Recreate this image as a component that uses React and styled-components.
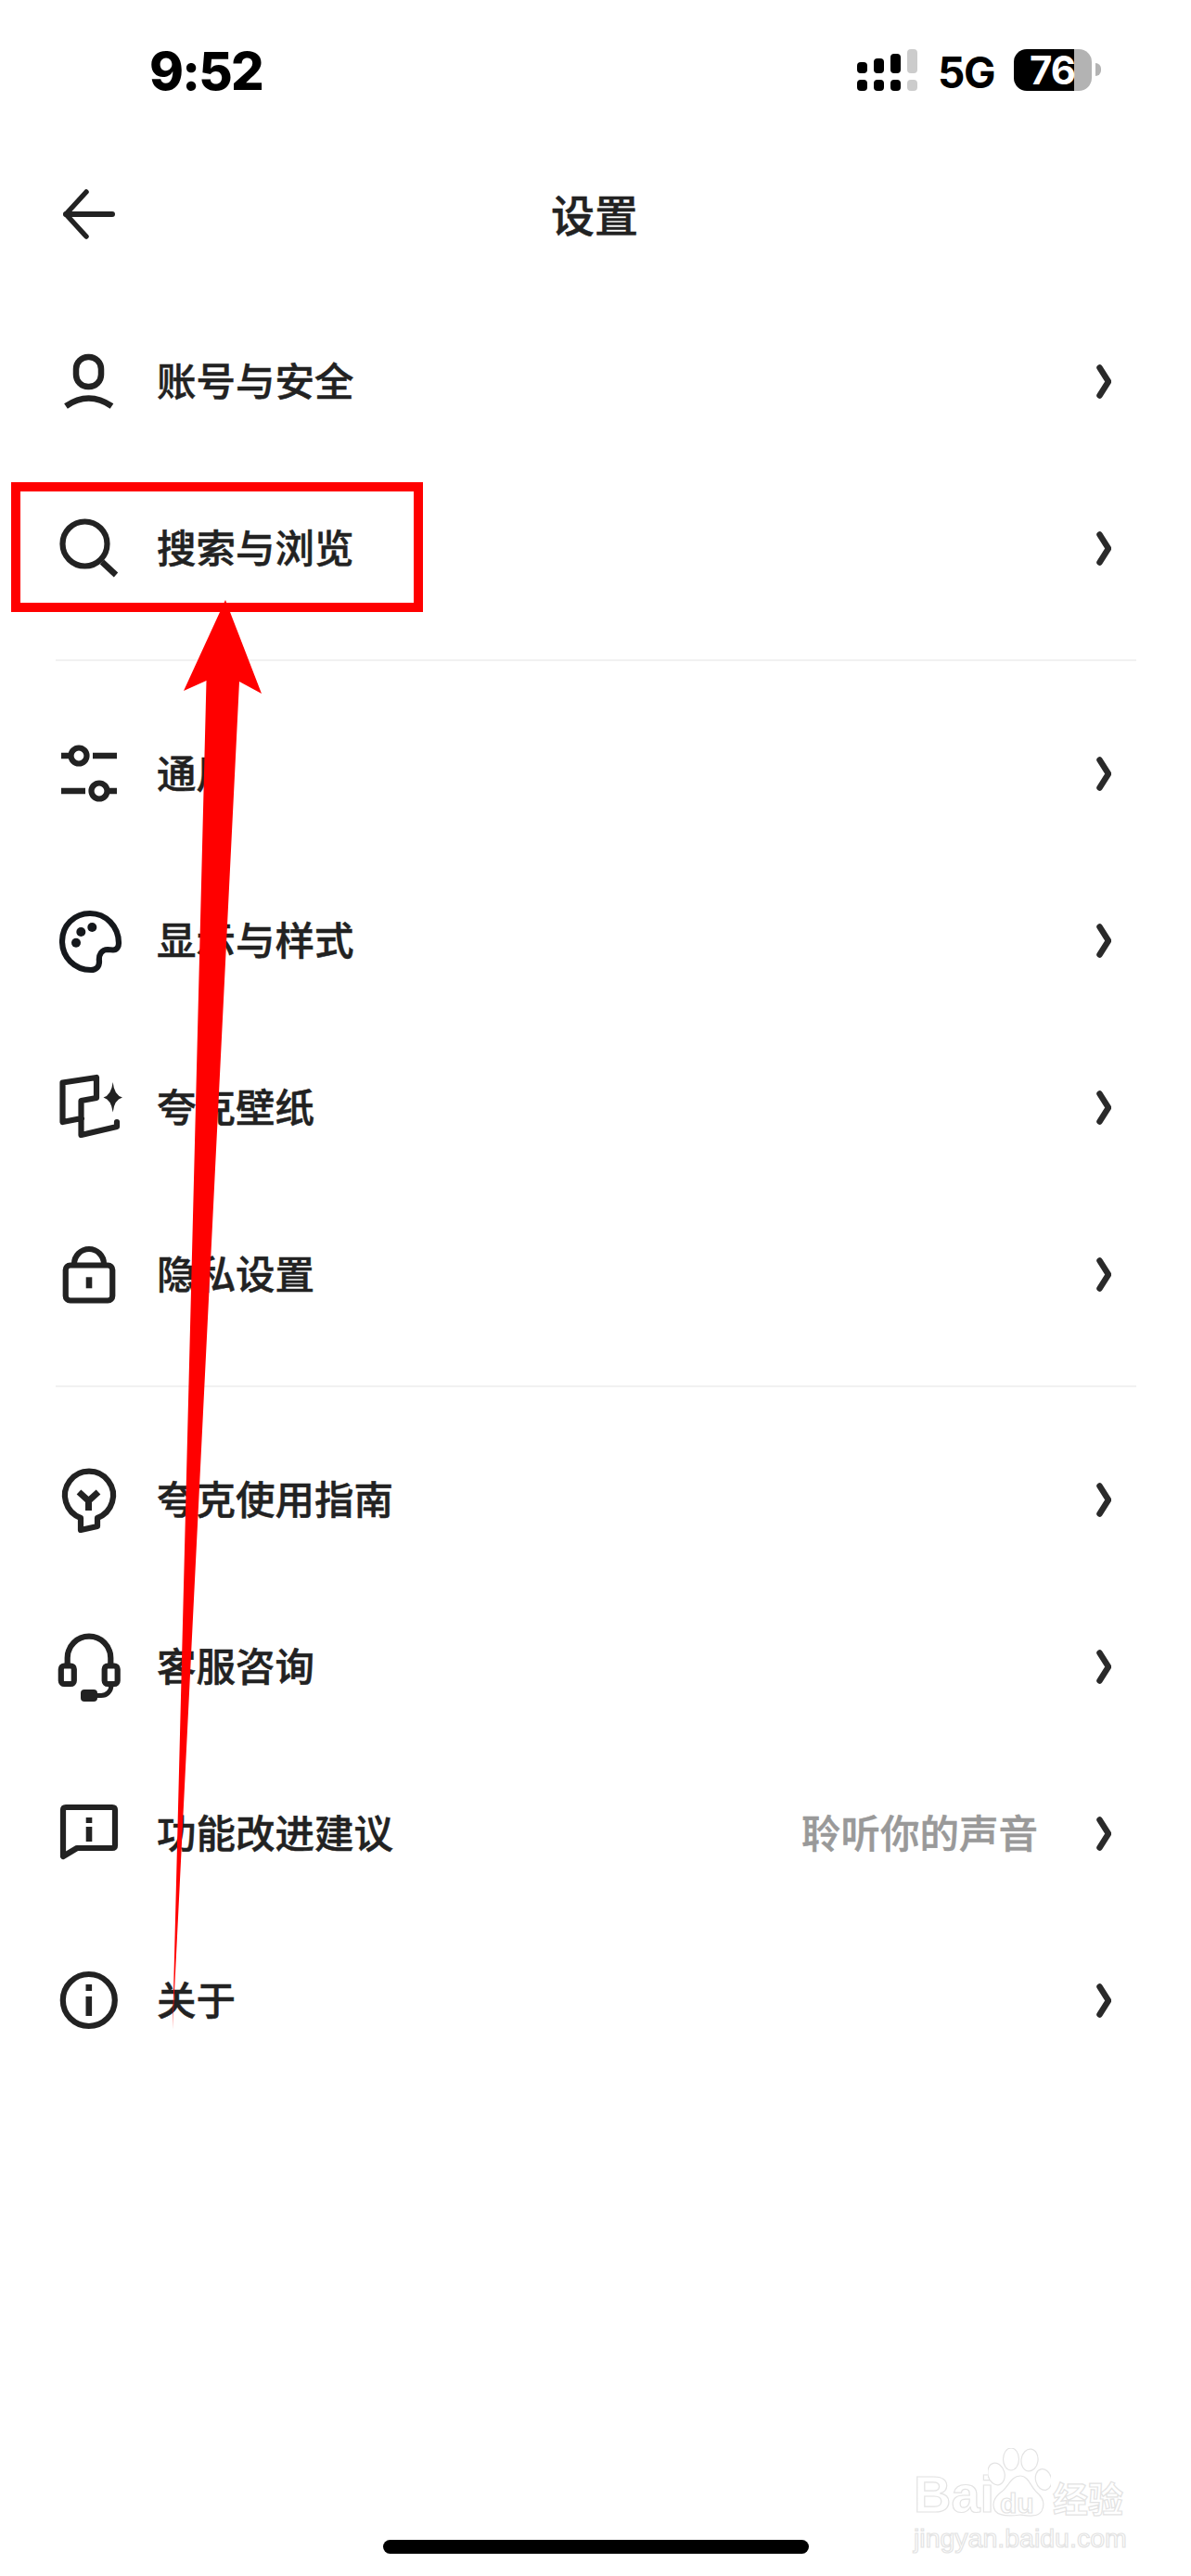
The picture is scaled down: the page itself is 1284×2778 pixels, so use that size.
import React from "react";
import styled, { createGlobalStyle } from "styled-components";

const Global = createGlobalStyle`
  html, body { margin: 0; padding: 0; background: #fff; }
  * { box-sizing: border-box; }
`;

const CJK = `"Noto Sans CJK SC", "Noto Sans", sans-serif`;

const Page = styled.div`
  position: relative;
  width: 1284px;
  height: 2778px;
  overflow: hidden;
  background: #fff;
  display: flex;
  flex-direction: column;
  font-family: ${CJK};
  color: #222;
`;

const StatusBar = styled.div`
  height: 141px;
  flex: none;
  display: flex;
  justify-content: space-between;
  align-items: flex-start;
  padding: 53px 97px 0 161px;
  color: #000;
`;

const Time = styled.div`
  font: 800 56px/48px Inter, "Liberation Sans", sans-serif;
  letter-spacing: -1.8px;
`;

const StatusRight = styled.div`
  display: flex;
  align-items: flex-start;
`;

const Signal = styled.svg`
  width: 65px;
  height: 45px;
  display: block;
`;

const Network = styled.div`
  margin: 2px 21px 0 22px;
  font: 700 46px/46px Inter, "Liberation Sans", sans-serif;
  letter-spacing: -1.5px;
`;

const Battery = styled.div`
  position: relative;
  width: 84px;
  height: 45px;
  margin-right: 10px;
  border-radius: 14px;
  background: linear-gradient(90deg, #000 77.4%, #b3b3b3 77.4%);
  color: #fff;
  font: 700 42px/45px Inter, "Liberation Sans", sans-serif;
  letter-spacing: -1px;
  padding-left: 17px;
  &::after {
    content: "";
    position: absolute;
    left: 88px;
    top: 15px;
    width: 6px;
    height: 14px;
    background: #b3b3b3;
    border-radius: 0 7px 7px 0;
  }
`;

const Header = styled.header`
  height: 180px;
  flex: none;
  display: grid;
  grid-template-columns: 1fr auto 1fr;
  align-items: center;
  padding: 0 68px 0 66px;
`;

const BackIcon = styled.svg`
  width: 60px;
  height: 56px;
  display: block;
  fill: none;
  stroke: #222;
  stroke-width: 6;
`;

const Title = styled.h1`
  margin: 0 0 3px;
  font: 500 47px/60px ${CJK};
  color: #222;
  -webkit-text-stroke: 0.5px #222;
`;

const Group = styled.section`
  display: flex;
  flex-direction: column;
`;

const Row = styled.div`
  height: 180px;
  flex: none;
  display: flex;
  align-items: center;
  padding: 0 86px 0 56px;
`;

const IconBox = styled.svg`
  width: 80px;
  height: 80px;
  flex: none;
  display: block;
  margin-right: 33px;
  fill: none;
  stroke: #222;
  stroke-width: 6.2;
`;

const Label = styled.span`
  flex: 1;
  padding-bottom: 5px;
  font: 500 42.5px/60px ${CJK};
  color: #222;
  -webkit-text-stroke: 0.5px #222;
`;

const Hint = styled.span`
  margin-right: 63px;
  padding-bottom: 5px;
  font: 500 42.5px/60px ${CJK};
  color: #999;
  -webkit-text-stroke: 0.5px #999;
`;

const Chevron = styled.svg`
  width: 16px;
  height: 37px;
  flex: none;
  display: block;
  fill: none;
  stroke: #2a2a2a;
  stroke-width: 6.5;
  stroke-linecap: round;
  stroke-linejoin: round;
`;

const Divider = styled.hr`
  height: 2px;
  border: 0;
  flex: none;
  margin: 30px 59px 31px 60px;
  background: #f1f1f1;
`;

const HomeBar = styled.div`
  flex: none;
  width: 459px;
  height: 15px;
  margin: auto 0 24px 413px;
  border-radius: 8px;
  background: #000;
`;

const HighlightBox = styled.div`
  position: absolute;
  left: 12px;
  top: 520px;
  width: 444px;
  height: 140px;
  border: 10px solid #f00;
`;

const ArrowOverlay = styled.svg`
  position: absolute;
  left: 0;
  top: 0;
  width: 1284px;
  height: 2778px;
  pointer-events: none;
`;

const Watermark = styled.div`
  position: absolute;
  left: 985px;
  top: 2640px;
  width: 232px;
  color: #fff;
  -webkit-text-stroke: 1.2px #e3e3e3;
  font-family: "Liberation Sans", sans-serif;
`;

const MarkLine = styled.div`
  display: flex;
  align-items: flex-end;
  height: 75px;
`;

const MarkBai = styled.span`
  width: 80px;
  font: 700 56px/50px "Liberation Sans", sans-serif;
  letter-spacing: 0;
`;

const Paw = styled.div`
  position: relative;
  width: 68px;
  height: 75px;
  flex: none;
`;

const PawIcon = styled.svg`
  width: 68px;
  height: 75px;
  display: block;
  fill: #fff;
  stroke: #e3e3e3;
  stroke-width: 1.2;
`;

const PawText = styled.span`
  position: absolute;
  left: 13px;
  top: 43px;
  font: 700 30px/34px "Liberation Sans", sans-serif;
`;

const MarkCn = styled.span`
  font: 700 38px/44px ${CJK};
  margin-left: 2px;
`;

const MarkUrl = styled.div`
  margin-top: 4px;
  font: 400 28.5px/36px "Liberation Sans", sans-serif;
  white-space: nowrap;
`;

const Person = () => (
  <IconBox viewBox="0 0 80 80">
    <rect x="26" y="14" width="27" height="32" rx="13" strokeWidth="6.5" />
    <path d="M15 67Q39.5 50 64.5 67" strokeWidth="6.5" />
  </IconBox>
);
const Search = () => (
  <IconBox viewBox="0 0 80 80">
    <circle cx="35.5" cy="35.5" r="24" />
    <path d="M54 55L69 69" strokeWidth="6.5" />
  </IconBox>
);
const Sliders = () => (
  <IconBox viewBox="0 0 80 80">
    <circle cx="29" cy="21" r="8.5" />
    <circle cx="51" cy="59" r="8.5" />
    <path d="M10 21H20M44 21H70M10 59H36M60 59H70" strokeWidth="6.5" />
  </IconBox>
);
const Palette = () => (
  <IconBox viewBox="0 0 80 80" style={{ stroke: "#15181c" }}>
    <path d="M41 11C24 11 11 24 11 41C11 58 24 72 42 72C48 72 51 68 51 63C50 55 54 50 60 50L66 50.5C70 50.5 72 47 72 43C72 25 58 11 41 11Z" />
    <g fill="#15181c" stroke="none">
      <circle cx="43.3" cy="26" r="5" />
      <circle cx="31.3" cy="31" r="5" />
      <circle cx="26" cy="42.7" r="5" />
    </g>
  </IconBox>
);
const Wallpaper = () => (
  <IconBox viewBox="0 0 80 80">
    <path
      d="M32 52L11.5 56V13.5L48 8V30L31.5 33V70L70 61V56"
      strokeLinejoin="round"
      strokeLinecap="round"
    />
    <path
      d="M65.7 13Q67 27 76 29.5Q67 32 65.7 45.5Q64 32 55.5 29.5Q64 27 65.7 13Z"
      fill="#222"
      stroke="none"
    />
  </IconBox>
);
const Lock = () => (
  <IconBox viewBox="0 0 80 80">
    <rect x="14.75" y="30.5" width="50.5" height="38" rx="5" />
    <path d="M24 30V29A16 16 0 0 1 56 29V30" />
    <rect x="36.7" y="43.3" width="6.6" height="12" fill="#222" stroke="none" />
  </IconBox>
);
const Bulb = () => (
  <IconBox viewBox="0 0 80 80">
    <path d="M31 60V73L49 69V60A26 26 0 1 0 31 60Z" strokeLinejoin="round" />
    <path d="M29 32L39.5 41.5L50 32M39.5 41V52" strokeWidth="7" />
  </IconBox>
);
const Headset = () => (
  <IconBox viewBox="0 0 80 80">
    <path d="M16.7 38V31A23.3 23.3 0 0 1 63.3 31V38" />
    <rect x="9.8" y="39.5" width="14" height="19.5" rx="3.5" />
    <rect x="56.7" y="39.5" width="14" height="19.5" rx="3.5" />
    <rect x="31" y="65" width="18" height="13" rx="4" fill="#222" stroke="none" />
    <path d="M48 71.5H53C59 71.5 64 67 64 60" strokeWidth="5" />
  </IconBox>
);
const Feedback = () => (
  <IconBox viewBox="0 0 80 80">
    <path
      d="M12 15Q12 12 15 12H65Q68 12 68 15V53Q68 56 65 56H27L12 65Z"
      strokeLinejoin="round"
    />
    <g fill="#222" stroke="none">
      <rect x="36.7" y="23" width="6.6" height="6" />
      <rect x="36.7" y="33" width="6.6" height="16" />
    </g>
  </IconBox>
);
const Info = () => (
  <IconBox viewBox="0 0 80 80">
    <circle cx="39.8" cy="40" r="28" />
    <g fill="#222" stroke="none">
      <rect x="36.5" y="23" width="6.6" height="7" />
      <rect x="36.5" y="36" width="6.6" height="21" />
    </g>
  </IconBox>
);

const groups = [
  [
    { Icon: Person, label: "账号与安全" },
    { Icon: Search, label: "搜索与浏览" },
  ],
  [
    { Icon: Sliders, label: "通用" },
    { Icon: Palette, label: "显示与样式" },
    { Icon: Wallpaper, label: "夸克壁纸" },
    { Icon: Lock, label: "隐私设置" },
  ],
  [
    { Icon: Bulb, label: "夸克使用指南" },
    { Icon: Headset, label: "客服咨询" },
    { Icon: Feedback, label: "功能改进建议", hint: "聆听你的声音" },
    { Icon: Info, label: "关于" },
  ],
];

export default function App() {
  return (
    <Page>
      <Global />
      <StatusBar>
        <Time>9:52</Time>
        <StatusRight>
          <Signal viewBox="0 0 65 45">
            <g fill="#000">
              <rect x="0" y="14" width="11" height="12" rx="4" />
              <rect x="18" y="10" width="11" height="16" rx="4" />
              <rect x="36" y="5" width="11" height="21" rx="4" />
              <rect x="0" y="33" width="11" height="12" rx="4" />
              <rect x="18" y="33" width="11" height="12" rx="4" />
              <rect x="36" y="33" width="11" height="12" rx="4" />
            </g>
            <g fill="#ccc">
              <rect x="54" y="0" width="11" height="26" rx="4" />
              <rect x="54" y="33" width="11" height="12" rx="4" />
            </g>
          </Signal>
          <Network>5G</Network>
          <Battery>76</Battery>
        </StatusRight>
      </StatusBar>
      <Header>
        <BackIcon viewBox="0 0 60 56">
          <path d="M27 4L5 28L27 52" strokeWidth="5.5" strokeLinecap="round" strokeLinejoin="round" />
          <path d="M5 28H55" strokeLinecap="round" />
        </BackIcon>
        <Title>设置</Title>
        <span />
      </Header>
      {groups.map((rows, i) => (
        <React.Fragment key={i}>
          {i > 0 && <Divider />}
          <Group>
            {rows.map(({ Icon, label, hint }) => (
              <Row key={label}>
                <Icon />
                <Label>{label}</Label>
                {hint && <Hint>{hint}</Hint>}
                <Chevron viewBox="0 0 16 37">
                  <path d="M3.5 3.5L13 18.5L3.5 33.5" />
                </Chevron>
              </Row>
            ))}
          </Group>
        </React.Fragment>
      ))}
      <HomeBar />
      <HighlightBox />
      <ArrowOverlay viewBox="0 0 1284 2778">
        <polygon
          fill="#f00"
          points="243,647 282,748 258,735 186,2189 222.5,734 198,745"
        />
      </ArrowOverlay>
      <Watermark>
        <MarkLine>
          <MarkBai>Bai</MarkBai>
          <Paw>
            <PawIcon viewBox="0 0 68 75">
              <ellipse cx="9" cy="28" rx="9" ry="12" transform="rotate(-15 9 28)" />
              <ellipse cx="25" cy="12" rx="8.5" ry="12" />
              <ellipse cx="45" cy="13" rx="9" ry="12" transform="rotate(8 45 13)" />
              <ellipse cx="60" cy="34" rx="8.5" ry="11.5" transform="rotate(-15 60 34)" />
              <path d="M35 30C44 30 46 42 53 48C60 54 62 60 58 68C54 75 42 73 35 72C28 73 14 75 8 68C3 60 8 52 15 47C22 42 25 30 35 30Z" />
            </PawIcon>
            <PawText>du</PawText>
          </Paw>
          <MarkCn>经验</MarkCn>
        </MarkLine>
        <MarkUrl>jingyan.baidu.com</MarkUrl>
      </Watermark>
    </Page>
  );
}
